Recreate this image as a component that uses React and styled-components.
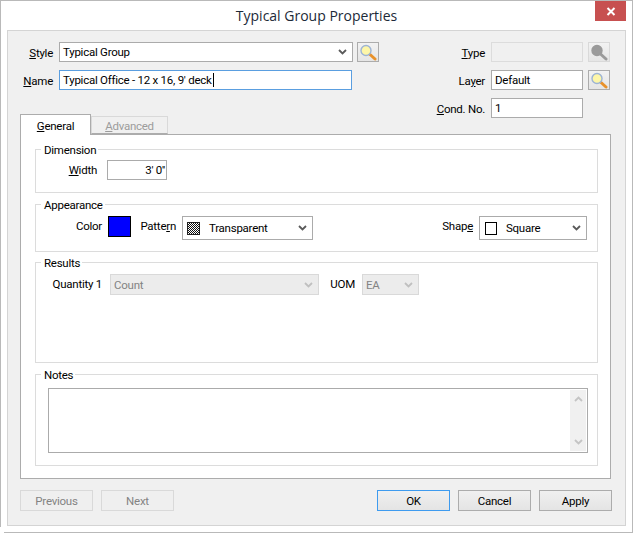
import styled, { createGlobalStyle } from 'styled-components'

const GlobalStyle = createGlobalStyle`
   html, body {
      margin: 0;
      padding: 0;
      background: #fff;
   }
   * {
      box-sizing: border-box;
   }
`

const Window = styled.div`
   width: 633px;
   height: 533px;
   padding: 0 6px 6px 6px;
   display: flex;
   flex-direction: column;
   position: relative;
   background: #fff;
   border: 1px solid #b9b9b9;
   font-family: Roboto, 'Liberation Sans', sans-serif;
   font-size: 11.5px;
   letter-spacing: -0.25px;
   color: #000;
`

const CornerNotch = styled.div`
   position: absolute;
   left: -1px;
   bottom: -1px;
   width: 4px;
   height: 6px;
   background: #fff;
`

const TitleBar = styled.div`
   height: 29px;
   flex: none;
   display: flex;
   align-items: center;
   justify-content: center;
   position: relative;
   font-family: 'Open Sans', sans-serif;
   font-size: 14px;
   letter-spacing: 0;
   color: #1c2a38;
`

const CloseButton = styled.div`
   position: absolute;
   top: 0;
   right: 0;
   width: 31px;
   height: 20px;
   background: #c75050;
   display: flex;
   align-items: center;
   justify-content: center;
`

const Body = styled.div`
   flex: 1;
   display: flex;
   flex-direction: column;
   padding: 11px 14px 13px 12px;
   background: #f0f0f0;
   border: 1px solid #d4d4d4;
`

const Top = styled.div`
   height: 92px;
   flex: none;
   display: flex;
   justify-content: space-between;
`

const LeftCol = styled.div`
   display: flex;
   flex-direction: column;
   gap: 8px;
`

const RightCol = styled.div`
   display: flex;
   flex-direction: column;
   gap: 8px;
   width: 180px;
`

const Row = styled.div`
   display: flex;
   align-items: center;
   height: 20px;
`

const TopLabel = styled.div`
   width: ${(p) => p.$width}px;
   padding: 2px 6px 0 0;
   text-align: right;
   white-space: nowrap;
   flex: none;
`

const Field = styled.div`
   height: ${(p) => p.$height || 20}px;
   width: ${(p) => p.$width}px;
   flex: none;
   display: flex;
   align-items: center;
   padding: 0 ${(p) => (p.$right ? 1 : 3)}px 0 ${(p) => p.$pad || 3}px;
   justify-content: ${(p) => (p.$right ? 'flex-end' : 'flex-start')};
   background: ${(p) => (p.$disabled ? '#f0f0f0' : '#fff')};
   border: 1px solid ${(p) => (p.$focused ? '#5a9ee0' : p.$disabled ? '#dcdcdc' : '#ababab')};
   color: ${(p) => (p.$disabled ? '#838383' : '#000')};
   white-space: nowrap;
`

const Caret = styled.span`
   width: 1px;
   height: 14px;
   background: #000;
   margin-left: 1px;
`

const SelectBox = styled(Field)`
   justify-content: space-between;
   padding-right: 5px;
   background: ${(p) => (p.$disabled ? '#ececec' : '#fff')};
   border-color: ${(p) => (p.$disabled ? '#d9d9d9' : '#ababab')};
`

const SelectValue = styled.span`
   display: flex;
   align-items: center;
   gap: 9px;
   color: ${(p) => (p.$disabled ? '#838383' : '#000')};
`

const LookupButton = styled.div`
   width: 22px;
   height: 20px;
   flex: none;
   margin-left: ${(p) => p.$gap || 4}px;
   display: flex;
   align-items: center;
   justify-content: center;
   background: linear-gradient(#f2f2f2, #e5e5e5);
   border: 1px solid ${(p) => (p.$disabled ? '#d9d9d9' : '#acacac')};
`

const Tabs = styled.div`
   display: flex;
   align-items: flex-end;
   height: 20px;
   margin-top: 16px;
`

const Tab = styled.div`
   height: ${(p) => (p.$active ? 21 : 18)}px;
   width: ${(p) => p.$width}px;
   margin-bottom: ${(p) => (p.$active ? -1 : 0)}px;
   padding-top: ${(p) => (p.$active ? 2 : 1)}px;
   display: flex;
   align-items: center;
   justify-content: center;
   background: ${(p) => (p.$active ? '#fff' : '#f0f0f0')};
   border: 1px solid ${(p) => (p.$active ? '#acacac' : '#d9d9d9')};
   border-bottom: ${(p) => (p.$active ? 'none' : '1px solid #acacac')};
   color: ${(p) => (p.$active ? '#000' : '#9c9c9c')};
   position: relative;
   z-index: ${(p) => (p.$active ? 1 : 0)};
`

const TabPanel = styled.div`
   height: 345px;
   width: 591px;
   flex: none;
   display: flex;
   flex-direction: column;
   padding: 14px 12px 12px 14px;
   background: #fff;
   border: 1px solid #acacac;
`

const Group = styled.div`
   height: ${(p) => p.$height}px;
   flex: none;
   margin-bottom: ${(p) => p.$after}px;
   padding: 0 10px 0 12px;
   border: 1px solid #dcdcdc;
   display: flex;
   flex-direction: column;
   position: relative;
`

const Legend = styled.div`
   position: absolute;
   top: -6px;
   left: 5px;
   padding: 0 2px 0 3px;
   line-height: 13px;
   background: #fff;
`

const GroupRow = styled.div`
   display: flex;
   align-items: flex-start;
   padding-top: ${(p) => p.$top}px;
`

const GroupLabel = styled.div`
   width: ${(p) => p.$width}px;
   flex: none;
   text-align: right;
   margin-left: ${(p) => p.$offset || 0}px;
   margin-right: ${(p) => p.$after || 0}px;
   line-height: 20px;
   white-space: nowrap;
`

const Swatch = styled.div`
   width: 23px;
   height: 21px;
   flex: none;
   background: #0000ff;
   border: 1px solid #000;
`

const Spacer = styled.div`
   flex: 1;
`

const PatternIcon = styled.span`
   width: 13px;
   height: 13px;
   display: block;
   border: 1px solid #222;
   background: repeating-conic-gradient(#111 0 25%, #fff 0 50%) 0 0 / 2px 2px;
`

const ShapeIcon = styled.span`
   width: 12px;
   height: 13px;
   display: block;
   border: 1px solid #000;
   background: #fff;
`

const Notes = styled.div`
   height: 65px;
   margin: 13px -1px 0 0;
   display: flex;
   justify-content: flex-end;
   padding: 1px;
   background: #fff;
   border: 1px solid #ababab;
`

const Scrollbar = styled.div`
   width: 16px;
   display: flex;
   flex-direction: column;
   justify-content: space-between;
   align-items: center;
   padding: 6px 0;
   background: #f0f0f0;
`

const Footer = styled.div`
   display: flex;
   gap: 8px;
   margin-top: 11px;
   width: 592px;
`

const Button = styled.div`
   width: 73px;
   height: 21px;
   display: flex;
   align-items: center;
   justify-content: center;
   color: ${(p) => (p.$disabled ? '#838383' : '#000')};
   background: ${(p) => (p.$disabled ? '#efefef' : 'linear-gradient(#f0f0f0, #e4e4e4)')};
   border: 1px solid ${(p) => (p.$default ? '#3e9bef' : p.$disabled ? '#d9d9d9' : '#acacac')};
`

const Chevron = ({ color = '#5a5a5a', up }) => (
   <svg width="9" height="6" viewBox="0 0 9 6" style={up ? { transform: 'scaleY(-1)' } : undefined}>
      <path d="M1 1 L4.5 4.5 L8 1" fill="none" stroke={color} strokeWidth="1.8" />
   </svg>
)

const Lens = ({ disabled }) => (
   <svg width="18" height="17" viewBox="0 0 18 17">
      <line x1="10.5" y1="10" x2="16" y2="15" stroke={disabled ? '#9a9a9a' : '#e8912a'} strokeWidth="3" strokeLinecap="round" />
      <circle
         cx="7"
         cy="6.5"
         r="5"
         fill={disabled ? '#9a9a9a' : '#fdf6a8'}
         stroke={disabled ? '#9a9a9a' : '#9db4d4'}
         strokeWidth="1.4"
      />
   </svg>
)

const App = () => (
   <>
      <GlobalStyle />
      <Window>
         <TitleBar>
            Typical Group Properties
            <CloseButton>
               <svg width="10" height="9" viewBox="0 0 10 9">
                  <path d="M1.5 1 L8.5 8 M8.5 1 L1.5 8" stroke="#fff" strokeWidth="2" />
               </svg>
            </CloseButton>
         </TitleBar>
         <Body>
            <Top>
               <LeftCol>
                  <Row>
                     <TopLabel $width={39}><u>S</u>tyle</TopLabel>
                     <SelectBox $width={294}>
                        <SelectValue>Typical Group</SelectValue>
                        <Chevron />
                     </SelectBox>
                     <LookupButton><Lens /></LookupButton>
                  </Row>
                  <Row>
                     <TopLabel $width={39}><u>N</u>ame</TopLabel>
                     <Field $width={293} $focused>
                        Typical Office - 12 x 16, 9' deck<Caret />
                     </Field>
                  </Row>
                  <Tabs>
                     <Tab $active $width={71}><span><u>G</u>eneral</span></Tab>
                     <Tab $width={77}><span><u>A</u>dvanced</span></Tab>
                  </Tabs>
               </LeftCol>
               <RightCol>
                  <Row>
                     <TopLabel $width={60}><u>T</u>ype</TopLabel>
                     <Field $width={92} $disabled />
                     <LookupButton $gap={5} $disabled><Lens disabled /></LookupButton>
                  </Row>
                  <Row>
                     <TopLabel $width={60}>La<u>y</u>er</TopLabel>
                     <Field $width={92}>Default</Field>
                     <LookupButton $gap={5}><Lens /></LookupButton>
                  </Row>
                  <Row>
                     <TopLabel $width={60}><u>C</u>ond. No.</TopLabel>
                     <Field $width={92}>1</Field>
                  </Row>
               </RightCol>
            </Top>
            <TabPanel>
               <Group $height={44} $after={11}>
                  <Legend>Dimension</Legend>
                  <GroupRow $top={10}>
                     <GroupLabel $width={49} $after={10}><u>W</u>idth</GroupLabel>
                     <Field $width={60} $right>3' 0''</Field>
                  </GroupRow>
               </Group>
               <Group $height={48} $after={10}>
                  <Legend>Appearance</Legend>
                  <GroupRow $top={11}>
                     <GroupLabel $width={54} $after={6}>Color</GroupLabel>
                     <Swatch />
                     <GroupLabel $width={45} $after={6}>Patte<u>r</u>n</GroupLabel>
                     <SelectBox $width={131} $height={24} $pad={4}>
                        <SelectValue><PatternIcon />Transparent</SelectValue>
                        <Chevron />
                     </SelectBox>
                     <Spacer />
                     <GroupLabel $width={40} $after={6}>Shap<u>e</u></GroupLabel>
                     <SelectBox $width={108} $height={24} $pad={5}>
                        <SelectValue><ShapeIcon />Square</SelectValue>
                        <Chevron />
                     </SelectBox>
                  </GroupRow>
               </Group>
               <Group $height={101} $after={11}>
                  <Legend>Results</Legend>
                  <GroupRow $top={11}>
                     <GroupLabel $width={54} $after={8}>Quantity 1</GroupLabel>
                     <SelectBox $width={209} $height={21} $disabled>
                        <SelectValue $disabled>Count</SelectValue>
                        <Chevron color="#c0c0c0" />
                     </SelectBox>
                     <GroupLabel $width={25} $offset={11} $after={7}>UOM</GroupLabel>
                     <SelectBox $width={57} $height={21} $disabled>
                        <SelectValue $disabled>EA</SelectValue>
                        <Chevron color="#c0c0c0" />
                     </SelectBox>
                  </GroupRow>
               </Group>
               <Group $height={92} $after={0}>
                  <Legend>Notes</Legend>
                  <Notes>
                     <Scrollbar>
                        <Chevron color="#c4c4c4" up />
                        <Chevron color="#c4c4c4" />
                     </Scrollbar>
                  </Notes>
               </Group>
            </TabPanel>
            <Footer>
               <Button $disabled>Previous</Button>
               <Button $disabled>Next</Button>
               <Spacer />
               <Button $default>OK</Button>
               <Button>Cancel</Button>
               <Button>Apply</Button>
            </Footer>
         </Body>
         <CornerNotch />
      </Window>
   </>
)

export default App
